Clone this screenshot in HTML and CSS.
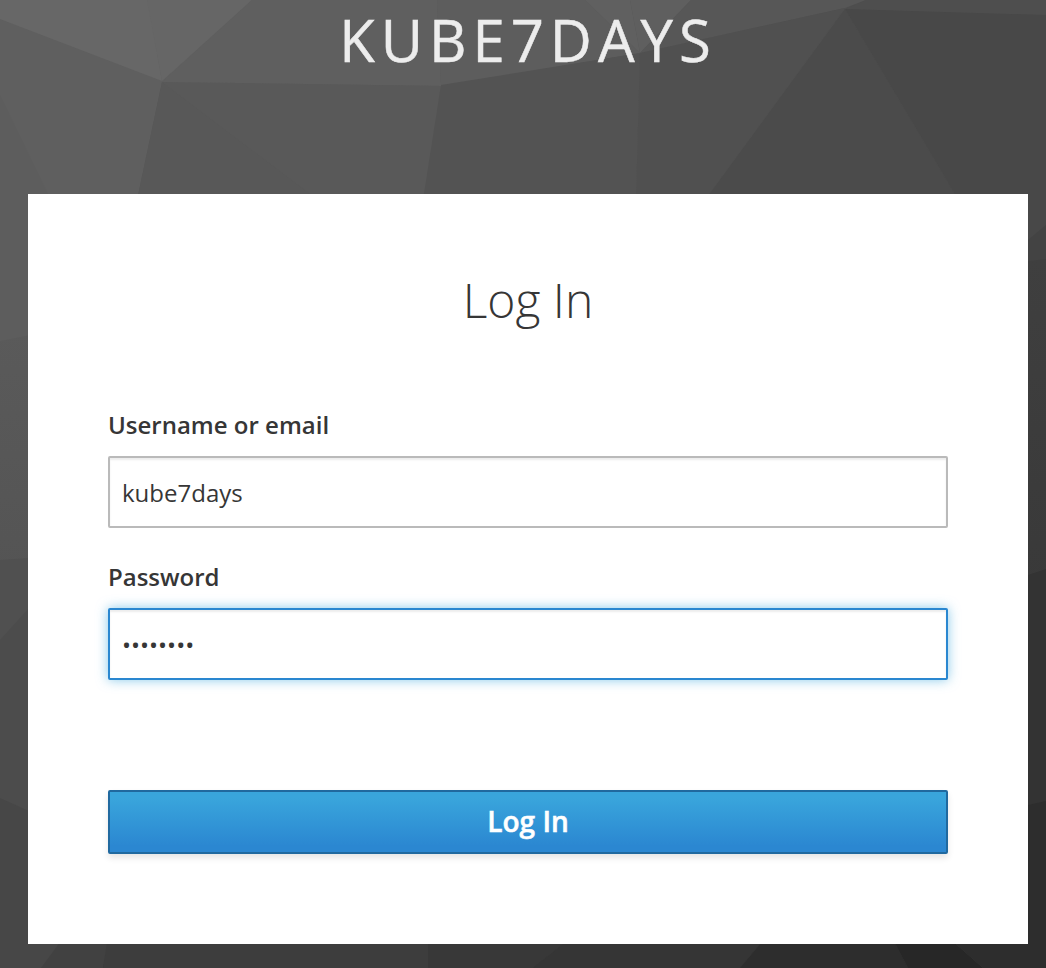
FILE: index.html
```html
<!DOCTYPE html>
<html lang="en">
<head>
<meta charset="utf-8">
<title>Log in to kube7days</title>
<link rel="stylesheet" href="styles.css">
</head>
<body>
<svg class="backdrop" viewBox="0 0 1046 968" preserveAspectRatio="none" aria-hidden="true">
  <defs>
    <linearGradient id="base" x1="0" y1="0" x2="1" y2="0"><stop offset="0" stop-color="#646464"/><stop offset="0.6" stop-color="#565656"/><stop offset="1" stop-color="#494949"/></linearGradient>
    <linearGradient id="leftShade" x1="0" y1="0" x2="0" y2="1"><stop offset="0" stop-color="#5a5a5a"/><stop offset="1" stop-color="#545454"/></linearGradient>
    <linearGradient id="rightShade" x1="0" y1="0" x2="0" y2="1"><stop offset="0" stop-color="#3f3f3f"/><stop offset="1" stop-color="#393939"/></linearGradient>
  </defs>
  <!-- upper facets -->
  <path fill="url(#base)" d="M0 0H1046V200H0Z"/>
  <path fill="#5f5f5f" d="M0 0H170V345H0Z"/>
  <path fill="#5d5d5d" d="M0 95 48 194V345H0Z"/>
  <path fill="#676767" d="M0 0H148L162 81 0 19Z"/>
  <path fill="#666" d="M147 0H252L162 81Z"/>
  <path fill="#5f5f5f" d="M252 0H437L441 86 162 82Z"/>
  <path fill="#595959" d="M162 82 441 86 424 200H137Z"/>
  <path fill="#585858" d="M162 82 310 194V200H137Z"/>
  <path fill="#5d5d5d" d="M437 0H585L640 53 441 86Z"/>
  <path fill="#606060" d="M585 0H630L640 53Z"/>
  <path fill="#5f5f5f" d="M630 0H691L640 53Z"/>
  <path fill="#535353" d="M441 85 640 53 636 200H423Z"/>
  <path fill="#575757" d="M691 0H866L845 8 640 53Z"/>
  <path fill="#505050" d="M640 53 845 8 705 200H636Z"/>
  <path fill="#4e4e4e" d="M866 0H1046V17L845 9Z"/>
  <path fill="#4b4b4b" d="M845 9 958 200H705Z"/>
  <path fill="#484848" d="M845 9 1046 15V300H1010L955 194Z"/>
  <!-- left facets -->
  <path fill="url(#leftShade)" d="M0 341 60 329V580H0Z"/>
  <path fill="#505050" d="M0 560 60 556V700H0Z"/>
  <path fill="#4c4c4c" d="M0 640 60 574V850H0Z"/>
  <path fill="#474747" d="M0 798 60 825V944L41 968H0Z"/>
  <!-- right facets -->
  <path fill="#434343" d="M1010 255 1046 225V300H1010Z"/>
  <path fill="url(#rightShade)" d="M1010 263 1046 259V600H1010Z"/>
  <path fill="#333" d="M1010 581 1046 569V850H1010Z"/>
  <path fill="#2d2d2d" d="M1010 809 1046 801V968H1010Z"/>
  <!-- lower facets -->
  <path fill="#474747" d="M0 930H68V968H0Z"/>
  <path fill="#414141" d="M69 930H111L103 968H41Z"/>
  <path fill="#3d3d3d" d="M109 930H428V968H103Z"/>
  <path fill="#383838" d="M428 930H581L533 968H428Z"/>
  <path fill="#353535" d="M581 930H772L740 968H533Z"/>
  <path fill="#2d2d2d" d="M772 930H888L908 968H740Z"/>
  <path fill="#272727" d="M888 930H940L983 968H908Z"/>
  <path fill="#2d2d2d" d="M940 930H1046V968H983Z"/>
</svg>
<div class="page">
  <header class="brand">kube7days</header>
  <main class="card">
    <h1 class="card-title">Log In</h1>
    <form class="form">
      <label class="label" for="username">Username or email</label>
      <input class="field" id="username" type="text" value="kube7days" spellcheck="false">
      <label class="label" for="password">Password</label>
      <input class="field field-active" id="password" type="password" value="kube7day">
      <button class="submit" type="button">Log In</button>
    </form>
  </main>
</div>
</body>
</html>
```
FILE: styles.css
```css
* {
  box-sizing: border-box;
}

body {
  margin: 0;
  height: 968px;
  overflow: hidden;
  background: #3a3a3a;
  color: #363636;
  font-family: "Open Sans", sans-serif;
}

.backdrop {
  position: absolute;
  inset: 0;
  z-index: -1;
  width: 1046px;
  height: 968px;
}

.page {
  display: flex;
  flex-direction: column;
  padding: 0 18px 24px 28px;
}

.brand {
  height: 194px;
  padding-top: 5px;
  color: #ededed;
  font-size: 58px;
  line-height: 70px;
  letter-spacing: 6px;
  text-align: center;
  text-transform: uppercase;
  -webkit-text-stroke: 0.5px #ededed;
}

.card {
  height: 750px;
  padding: 73px 80px 0;
  background: #fff;
}

.card-title {
  margin: 0 0 77px;
  font-size: 48px;
  font-weight: 300;
  line-height: 66px;
  text-align: center;
}

.form {
  display: flex;
  flex-direction: column;
}

.label {
  margin-bottom: 16px;
  font-size: 24px;
  font-weight: 600;
  line-height: 30px;
}

.field {
  height: 72px;
  margin: 0 0 34px;
  padding: 0 12px;
  border: 2px solid #bababa;
  border-radius: 2px;
  outline: 0;
  background: #fff;
  box-shadow: inset 0 2px 2px rgba(0, 0, 0, 0.075);
  color: #363636;
  font: 24px "Open Sans", sans-serif;
}

.field-active {
  margin-bottom: 110px;
  border-color: #2a87d0;
  box-shadow: inset 0 2px 2px rgba(0, 0, 0, 0.075), 0 0 12px rgba(57, 165, 220, 0.6);
}

.submit {
  height: 64px;
  padding: 0 0 2px;
  border: 2px solid #20699f;
  border-radius: 2px;
  background: linear-gradient(#39a5dc 10%, #2b87d1 90%);
  box-shadow: 0 4px 6px rgba(3, 3, 3, 0.1);
  color: #fff;
  font: 600 28px "Open Sans", sans-serif;
  -webkit-text-stroke: 0.5px #fff;
}
```
